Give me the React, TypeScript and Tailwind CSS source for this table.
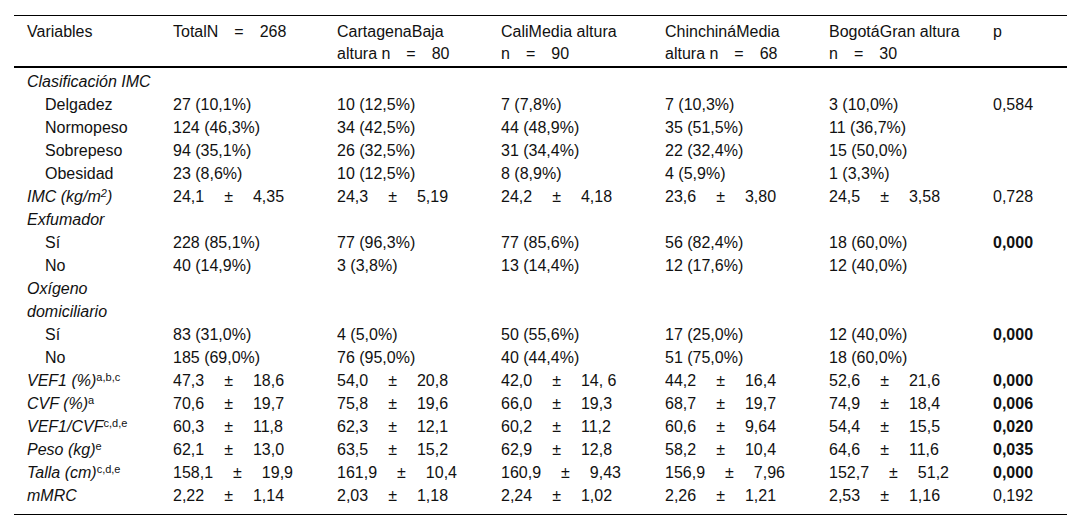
import React from 'react';

type Cell = string | React.ReactNode;

interface Row {
  label: React.ReactNode;
  indent?: boolean;
  cells?: Cell[];
  p?: string;
  bold?: boolean;
}

// mean ± sd, spaced out like the source table
const pm = (a: string, b: string) => (
  <span className="whitespace-pre">
    {a}
    {'\u2003\u2005±\u2003\u2005'}
    {b}
  </span>
);

const Sup = ({ children }: { children: React.ReactNode }) => (
  <sup className="not-italic text-[11px]">{children}</sup>
);

const rows: Row[] = [
  { label: <i>Clasificación IMC</i> },
  { label: 'Delgadez', indent: true, cells: ['27 (10,1%)', '10 (12,5%)', '7 (7,8%)', '7 (10,3%)', '3 (10,0%)'], p: '0,584' },
  { label: 'Normopeso', indent: true, cells: ['124 (46,3%)', '34 (42,5%)', '44 (48,9%)', '35 (51,5%)', '11 (36,7%)'] },
  { label: 'Sobrepeso', indent: true, cells: ['94 (35,1%)', '26 (32,5%)', '31 (34,4%)', '22 (32,4%)', '15 (50,0%)'] },
  { label: 'Obesidad', indent: true, cells: ['23 (8,6%)', '10 (12,5%)', '8 (8,9%)', '4 (5,9%)', '1 (3,3%)'] },
  {
    label: (
      <i>
        IMC (kg/m<sup className="text-[11px]">2</sup>)
      </i>
    ),
    cells: [pm('24,1', '4,35'), pm('24,3', '5,19'), pm('24,2', '4,18'), pm('23,6', '3,80'), pm('24,5', '3,58')],
    p: '0,728',
  },
  { label: <i>Exfumador</i> },
  { label: 'Sí', indent: true, cells: ['228 (85,1%)', '77 (96,3%)', '77 (85,6%)', '56 (82,4%)', '18 (60,0%)'], p: '0,000', bold: true },
  { label: 'No', indent: true, cells: ['40 (14,9%)', '3 (3,8%)', '13 (14,4%)', '12 (17,6%)', '12 (40,0%)'] },
  {
    label: (
      <i>
        Oxígeno
        <br />
        domiciliario
      </i>
    ),
  },
  { label: 'Sí', indent: true, cells: ['83 (31,0%)', '4 (5,0%)', '50 (55,6%)', '17 (25,0%)', '12 (40,0%)'], p: '0,000', bold: true },
  { label: 'No', indent: true, cells: ['185 (69,0%)', '76 (95,0%)', '40 (44,4%)', '51 (75,0%)', '18 (60,0%)'] },
  {
    label: (
      <>
        <i>VEF1 (%)</i>
        <Sup>a,b,c</Sup>
      </>
    ),
    cells: [pm('47,3', '18,6'), pm('54,0', '20,8'), pm('42,0', '14, 6'), pm('44,2', '16,4'), pm('52,6', '21,6')],
    p: '0,000',
    bold: true,
  },
  {
    label: (
      <>
        <i>CVF (%)</i>
        <Sup>a</Sup>
      </>
    ),
    cells: [pm('70,6', '19,7'), pm('75,8', '19,6'), pm('66,0', '19,3'), pm('68,7', '19,7'), pm('74,9', '18,4')],
    p: '0,006',
    bold: true,
  },
  {
    label: (
      <>
        <i>VEF1/CVF</i>
        <Sup>c,d,e</Sup>
      </>
    ),
    cells: [pm('60,3', '11,8'), pm('62,3', '12,1'), pm('60,2', '11,2'), pm('60,6', '9,64'), pm('54,4', '15,5')],
    p: '0,020',
    bold: true,
  },
  {
    label: (
      <>
        <i>Peso (kg)</i>
        <Sup>e</Sup>
      </>
    ),
    cells: [pm('62,1', '13,0'), pm('63,5', '15,2'), pm('62,9', '12,8'), pm('58,2', '10,4'), pm('64,6', '11,6')],
    p: '0,035',
    bold: true,
  },
  {
    label: (
      <>
        <i>Talla (cm)</i>
        <Sup>c,d,e</Sup>
      </>
    ),
    cells: [pm('158,1', '19,9'), pm('161,9', '10,4'), pm('160,9', '9,43'), pm('156,9', '7,96'), pm('152,7', '51,2')],
    p: '0,000',
    bold: true,
  },
  {
    label: <i>mMRC</i>,
    cells: [pm('2,22', '1,14'), pm('2,03', '1,18'), pm('2,24', '1,02'), pm('2,26', '1,21'), pm('2,53', '1,16')],
    p: '0,192',
  },
];

const headers: React.ReactNode[] = [
  <span className="whitespace-pre">{'TotalN\u2003=\u2003268'}</span>,
  <>
    CartagenaBaja
    <br />
    <span className="whitespace-pre">{'altura n\u2003=\u200380'}</span>
  </>,
  <>
    CaliMedia altura
    <br />
    <span className="whitespace-pre">{'n\u2003=\u200390'}</span>
  </>,
  <>
    ChinchináMedia
    <br />
    <span className="whitespace-pre">{'altura n\u2003=\u200368'}</span>
  </>,
  <>
    BogotáGran altura
    <br />
    <span className="whitespace-pre">{'n\u2003=\u200330'}</span>
  </>,
];

export default function App() {
  return (
    <div className="w-[1067px] h-[530px] bg-white pl-[14px] pt-[15px] text-[#111] font-['Liberation_Sans',Arial,sans-serif] text-[16px]">
      <table className="w-[1053px] table-fixed border-collapse">
        <colgroup>
          <col className="w-[146px]" />
          <col className="w-[164px]" />
          <col className="w-[164px]" />
          <col className="w-[164px]" />
          <col className="w-[164px]" />
          <col className="w-[164px]" />
          <col />
        </colgroup>
        <thead>
          <tr className="border-t border-black border-b-2">
            <th className="text-left font-normal align-top pl-[13px] pt-[5px] pb-[1px] leading-[22px]">Variables</th>
            {headers.map((h, i) => (
              <th key={i} className="text-left font-normal align-top pl-[13px] pt-[5px] pb-[1px] leading-[22px] whitespace-nowrap">
                {h}
              </th>
            ))}
            <th className="text-left font-normal align-top pl-[13px] pt-[5px] pb-[1px] leading-[22px]">p</th>
          </tr>
        </thead>
        <tbody className="border-b border-black">
          {rows.map((r, i) => {
            const first = i === 0;
            const last = i === rows.length - 1;
            const pad = first ? 'pt-[2px]' : last ? 'pb-[7px]' : '';
            return (
              <tr key={i}>
                <td className={`align-top leading-[23px] whitespace-nowrap ${r.indent ? 'pl-[31px]' : 'pl-[13px]'} ${pad}`}>
                  {r.label}
                </td>
                {[0, 1, 2, 3, 4].map((c) => (
                  <td key={c} className={`align-top leading-[23px] whitespace-nowrap pl-[13px] ${pad}`}>
                    {r.cells ? r.cells[c] : null}
                  </td>
                ))}
                <td className={`align-top leading-[23px] whitespace-nowrap pl-[13px] ${pad} ${r.bold ? 'font-bold' : ''}`}>
                  {r.p ?? null}
                </td>
              </tr>
            );
          })}
        </tbody>
      </table>
    </div>
  );
}
